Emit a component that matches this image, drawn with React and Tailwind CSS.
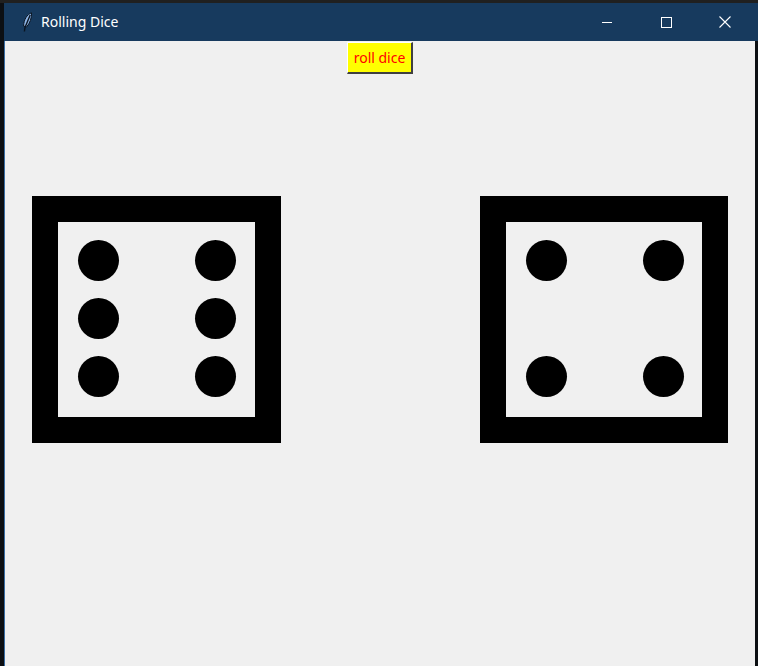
import React from 'react';

const FACES = {
  six: [true, true, true, true, true, true],
  four: [true, true, false, false, true, true],
};

function Feather() {
  return (
    <svg width="10" height="20" viewBox="0 0 10 20">
      <path d="M9.5 0.8 C5 2.5 1.8 7.5 1.6 14 L4.5 15 C8 11 9.8 6 9.5 0.8 Z" fill="#8fb6e8" stroke="#0a1522" strokeWidth="1" />
      <path d="M8.2 3 L3 15.5 L2.4 19.5" stroke="#0a1522" strokeWidth="1.4" fill="none" />
    </svg>
  );
}

function Die({ pips, wide }) {
  return (
    <div className={(wide ? 'w-[249px]' : 'w-[248px]') + ' h-[247px] bg-black p-[26px]'}>
      <div className="w-full h-full bg-[#f0f0f0] pl-[20px] pt-[18px]">
        <div className="grid grid-cols-[41px_41px] grid-rows-[41px_41px_41px] gap-x-[76px] gap-y-[17px]">
          {pips.map((on, i) => (
            <div key={i} className={on ? 'w-[41px] h-[41px] rounded-full bg-black' : 'w-[41px] h-[41px]'} />
          ))}
        </div>
      </div>
    </div>
  );
}

function App() {
  return (
    <div className="w-[758px] h-[666px] bg-[#0c0f13] flex flex-col overflow-hidden" style={{ fontFamily: '"Noto Sans", "Open Sans", sans-serif' }}>
      <div className="h-[3px] bg-[#202020] flex-none" />
      <div className="flex flex-1 min-h-0">
        <div className="w-[4px] flex-none" />
        <div className="flex-1 flex flex-col min-h-0">
          {/* title bar */}
          <div className="h-[38px] flex-none bg-[#173a5e] flex items-center text-white">
            <div className="w-[18px]" />
            <Feather />
            <span className="ml-[9px] text-[14px] leading-none">Rolling Dice</span>
            <div className="flex-1" />
            <div className="w-[46px] h-full flex items-center justify-center">
              <div className="w-[10px] h-px bg-white" />
            </div>
            <div className="ml-[13px] w-[46px] h-full flex items-center justify-center">
              <div className="w-[11px] h-[11px] border border-white" />
            </div>
            <div className="ml-[13px] w-[46px] h-full flex items-center justify-center">
              <svg width="12" height="12" viewBox="0 0 12 12">
                <path d="M0.5 0.5 L11.5 11.5 M11.5 0.5 L0.5 11.5" stroke="#fff" strokeWidth="1.1" />
              </svg>
            </div>
            <div className="w-[10px]" />
          </div>
          <div className="flex flex-1 min-h-0">
            <div className="w-[1px] bg-[#3a6ea5] flex-none" />
            {/* client area */}
            <div className="flex-1 bg-[#f0f0f0] flex flex-col">
              <div className="flex justify-center pt-[1px]">
                <button className="h-[32px] w-[66px] bg-[#ffff00] text-[#ff0000] text-[14px] leading-none border-t border-l border-t-white border-l-white border-r-2 border-b-2 border-r-[#404040] border-b-[#404040]">
                  roll dice
                </button>
              </div>
              <div className="flex justify-between px-[27px] mt-[122px]">
                <Die pips={FACES.six} wide />
                <Die pips={FACES.four} />
              </div>
            </div>
            <div className="w-[3px] flex-none" />
          </div>
        </div>
      </div>
    </div>
  );
}

export default App;
